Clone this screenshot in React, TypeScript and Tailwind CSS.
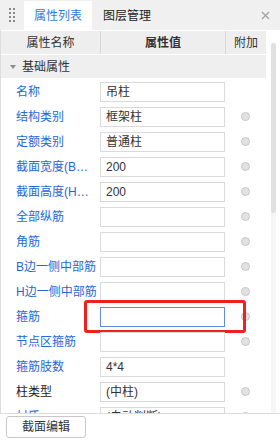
import React from "react";

type Row = { label: string; value?: string; radio?: boolean; dark?: boolean; focus?: boolean };

const rows: Row[] = [
  { label: "名称", value: "吊柱" },
  { label: "结构类别", value: "框架柱", radio: true },
  { label: "定额类别", value: "普通柱", radio: true },
  { label: "截面宽度(B边)(mm)", value: "200", radio: true },
  { label: "截面高度(H边)(mm)", value: "200", radio: true },
  { label: "全部纵筋", radio: true },
  { label: "角筋", radio: true },
  { label: "B边一侧中部筋", radio: true },
  { label: "H边一侧中部筋", radio: true },
  { label: "箍筋", radio: true, focus: true },
  { label: "节点区箍筋", radio: true },
  { label: "箍筋肢数", value: "4*4" },
  { label: "柱类型", value: "(中柱)", radio: true, dark: true },
  { label: "材质", value: "(自动判断)", radio: true },
];

function Radio() {
  return <div className="w-[9px] h-[9px] rounded-full bg-[#e2e2e2] border border-[#c6c6c6]" />;
}

export default function App() {
  return (
    <div className="w-[280px] h-[444px] flex flex-col bg-white overflow-hidden text-[12px] text-[#333] font-['Liberation_Sans','Noto_Sans_CJK_SC',sans-serif]">
      {/* tab strip */}
      <div className="h-[30px] flex items-end bg-[#f0f0f0] shrink-0">
        <div className="w-[24px] h-full flex items-center justify-center">
          <div className="grid grid-cols-2 gap-x-[2px] gap-y-[2px]">
            {Array.from({ length: 8 }).map((_, i) => (
              <div key={i} className="w-[2px] h-[2px] bg-[#8a8a8a]" />
            ))}
          </div>
        </div>
        <div className="w-[68px] h-[29px] bg-white flex items-center justify-center text-[#2f7de1]">属性列表</div>
        <div className="h-[29px] flex items-center pl-[11px] text-[#222]">图层管理</div>
        <div className="ml-auto mr-[10px] h-full flex items-center">
          <svg width="9" height="9" viewBox="0 0 9 9" stroke="#a0a0a0" strokeWidth="1.2"><path d="M1 1l7 7M8 1l-7 7" /></svg>
        </div>
      </div>

      <div className="flex flex-1 min-h-0 border-b border-[#dcdcdc]">
        <div className="w-[266px] flex flex-col border-l border-[#dedede] overflow-hidden">
          <div className="mt-px h-[23px] shrink-0 flex bg-[#eeeeee]">
            <div className="w-[100px] border-r border-[#d6d6d6] flex items-center justify-center">属性名称</div>
            <div className="w-[125px] border-r border-[#d6d6d6] flex items-center justify-center font-bold">属性值</div>
            <div className="flex-1 flex items-center justify-center">附加</div>
          </div>
          <div className="mt-px h-[23px] shrink-0 flex items-center bg-[#efefef]">
            <svg className="ml-[9px] mr-[6px]" width="6" height="4" viewBox="0 0 6 4"><path d="M0 0h6L3 4z" fill="#8c8c8c" /></svg>
            <span>基础属性</span>
          </div>
          <div className="mt-px flex flex-col">
            {rows.map((r) => (
              <div key={r.label} className="relative h-[25px] shrink-0 flex items-center">
                <div className={`w-[99px] pl-[15px] pr-[3px] truncate ${r.dark ? "text-[#222]" : "text-[#2468d8]"}`}>{r.label}</div>
                <div className={`w-[125px] h-[20px] border flex items-center px-[5px] ${r.focus ? "border-[#5d8ddb]" : "border-[#dadada]"}`}>
                  {r.value}
                </div>
                <div className="flex-1 flex justify-center">{r.radio && <Radio />}</div>
                {r.focus && (
                  <div className="absolute left-[83px] top-[-4px] w-[162px] h-[33px] border-[3px] border-[#f0201e] rounded-[3px]" />
                )}
              </div>
            ))}
          </div>
        </div>
        <div className="flex-1 flex justify-center pt-[13px]">
          <div className="w-[5px] h-full bg-[#f6f6f6] rounded-full">
            <div className="w-[5px] h-[170px] bg-[#e0e0e0] rounded-full" />
          </div>
        </div>
      </div>

      <div className="h-[30px] shrink-0 pl-[6px] pt-[2px]">
        <button className="w-[80px] h-[22px] border border-[#c8c8c8] rounded-[3px] bg-white text-[12px] text-[#333]">截面编辑</button>
      </div>
    </div>
  );
}
